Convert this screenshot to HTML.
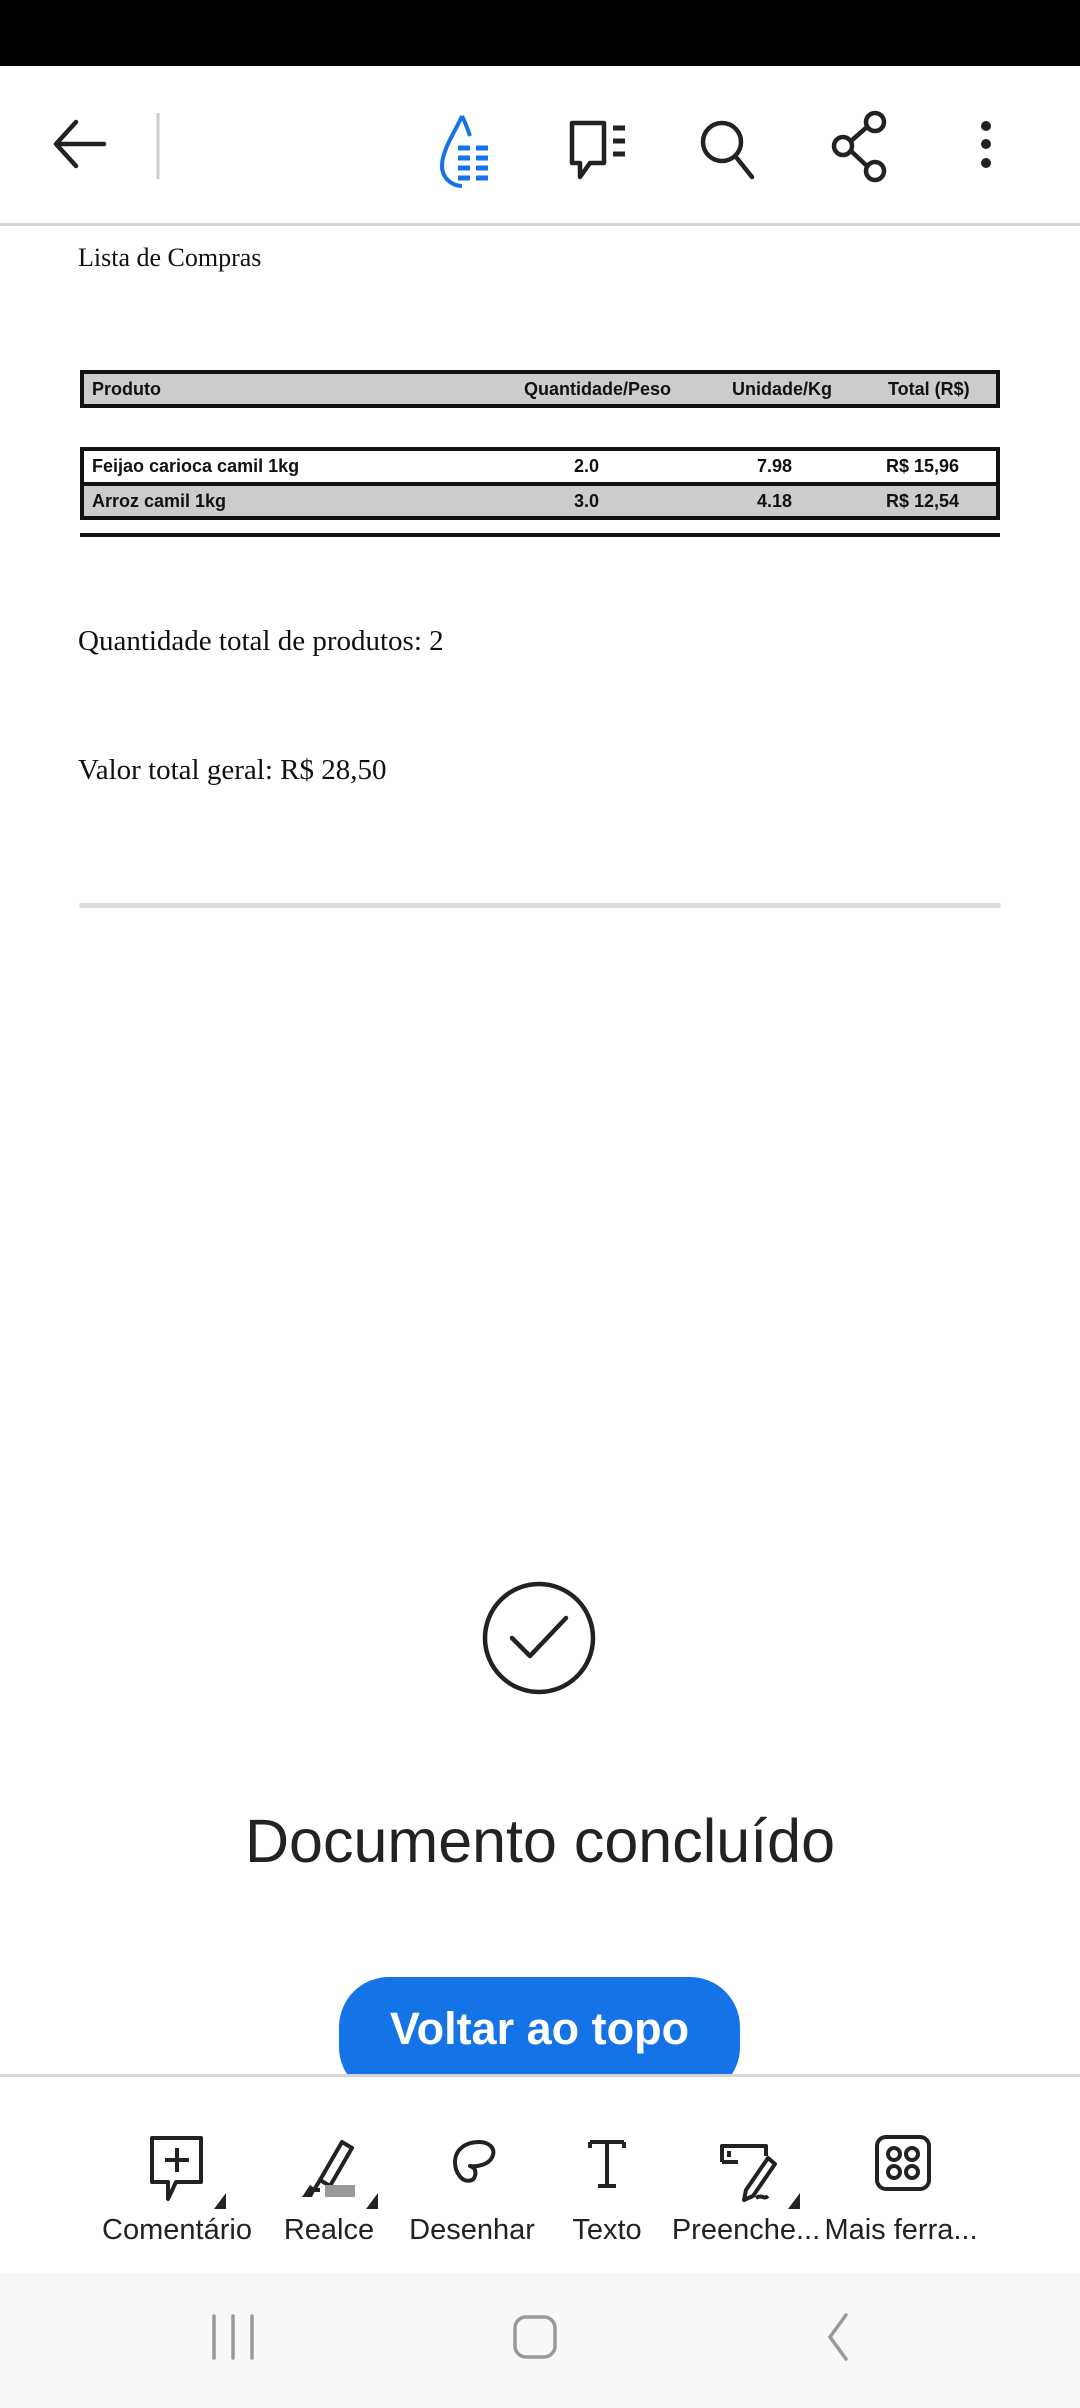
<!DOCTYPE html>
<html><head><meta charset="utf-8"><style>
*{margin:0;padding:0;box-sizing:border-box}
body{width:1080px;height:2408px;position:relative;background:#fff;overflow:hidden;font-family:"Liberation Sans",sans-serif;color:#222}
.abs{position:absolute}
.serif{font-family:"Liberation Serif",serif;color:#111}
.tb{position:absolute;left:80px;width:920px;border:4px solid #111;font-size:18px;font-weight:bold;color:#111}
.tb div{position:absolute;top:0}
.lbl{position:absolute;top:2214px;font-size:29px;color:#222;transform:translateX(-50%);white-space:nowrap}
</style></head><body>
<div class="abs" style="left:0;top:0;width:1080px;height:66px;background:#000"></div>
<svg class="abs" style="left:0;top:66px" width="1080" height="158">
<g fill="none" stroke="#222" stroke-width="4.5" stroke-linecap="round" stroke-linejoin="round">
<path d="M104 78H56M76 56L56 78L76 100"/>
</g>
<line x1="158" y1="47" x2="158" y2="113" stroke="#ccc" stroke-width="3"/>
<g fill="none" stroke="#1473e6" stroke-width="4">
<path d="M462 50C455 66 442 84 442 100C442 112 452 120 462 120"/>
<path d="M462 50C466 58 468 64 470 70"/>
</g>
<g stroke="#1473e6" stroke-width="5"><path d="M458 82h12M476 82h12M458 92h12M476 92h12M458 102h12M476 102h12M458 112h12M476 112h12"/></g>
<g fill="none" stroke="#222" stroke-width="4.5" stroke-linejoin="round">
<path d="M572 57h32v40h-14l-10 14v-14h-8z"/>
</g>
<g stroke="#222" stroke-width="5"><path d="M613 62h12M613 75h12M613 88h12"/></g>
<g fill="none" stroke="#222" stroke-width="4.5" stroke-linecap="round">
<circle cx="722" cy="76" r="19"/><path d="M736 91L752 111"/>
<circle cx="875" cy="56" r="9"/><circle cx="843" cy="80" r="9"/><circle cx="875" cy="105" r="9"/>
<path d="M851 75L867 61M851 85L867 100"/>
</g>
<g fill="#222"><circle cx="986" cy="60" r="5"/><circle cx="986" cy="78" r="5"/><circle cx="986" cy="97" r="5"/></g>
</svg>
<div class="abs" style="left:0;top:223px;width:1080px;height:3px;background:#d6d6d6"></div>
<div class="abs serif" style="left:78px;top:243px;font-size:26px">Lista de Compras</div>
<div class="tb" style="top:370px;height:38px;background:#ccc"><div style="left:8px;top:5px">Produto</div><div style="left:440px;top:5px">Quantidade/Peso</div><div style="left:648px;top:5px">Unidade/Kg</div><div style="left:804px;top:5px">Total (R$)</div></div>
<div class="tb" style="top:447px;height:39px;background:#fff"><div style="left:8px;top:5px">Feijao carioca camil 1kg</div><div style="left:490px;top:5px">2.0</div><div style="left:673px;top:5px">7.98</div><div style="left:802px;top:5px">R$ 15,96</div></div>
<div class="tb" style="top:482px;height:38px;background:#ccc"><div style="left:8px;top:5px">Arroz camil 1kg</div><div style="left:490px;top:5px">3.0</div><div style="left:673px;top:5px">4.18</div><div style="left:802px;top:5px">R$ 12,54</div></div>
<div class="abs" style="left:80px;top:533px;width:920px;height:4px;background:#111"></div>
<div class="abs serif" style="left:78px;top:625px;font-size:29px">Quantidade total de produtos: 2</div>
<div class="abs serif" style="left:78px;top:754px;font-size:29px">Valor total geral: R$ 28,50</div>
<div class="abs" style="left:79px;top:903px;width:922px;height:5px;background:#ddd;border-radius:3px"></div>
<svg class="abs" style="left:480px;top:1580px" width="120" height="120"><circle cx="59" cy="58" r="54" fill="none" stroke="#222" stroke-width="4.5"/><path d="M32 58L50 76L86 38" fill="none" stroke="#222" stroke-width="4.5" stroke-linecap="round" stroke-linejoin="round"/></svg>
<div class="abs" style="left:0;width:1080px;top:1806px;text-align:center;font-size:61px;color:#222">Documento concluído</div>
<div class="abs" style="left:339px;top:1977px;width:401px;height:120px;border-radius:50px;background:#1473e6;color:#fff;font-weight:bold;font-size:45px;text-align:center;line-height:104px">Voltar ao topo</div>
<div class="abs" style="left:0;top:2074px;width:1080px;height:200px;background:#fff;border-top:3px solid #d6d6d6"></div>
<svg class="abs" style="left:0;top:2106px" width="1080" height="110">
<g fill="none" stroke="#222" stroke-width="4" stroke-linejoin="round">
<path d="M152 32h49v44h-25l-8 17v-17h-16z"/>
<path d="M177 42v24M165 54h24"/>
<path d="M342 36l10 6-22 38-10-6z M320 74l-6 10h6"/>
<path d="M455 56c0-12 10-20 24-20 10 0 16 6 14 13-3 10-16 12-23 11 8 2 6 12 2 14-10 4-17-8-17-18z"/>
<path d="M590 36h34M607 36v44M598 80h18M590 36v6M624 36v6"/>
<path d="M722 56V40h44v10M722 56h16M729 45v6M768 52l7 6-22 32-9 4 2-10z M756 92c6-4 8 2 12-2"/>
<rect x="877" y="31" width="52" height="52" rx="9"/>
<circle cx="894" cy="48" r="6"/><circle cx="912" cy="48" r="6"/><circle cx="894" cy="66" r="6"/><circle cx="912" cy="66" r="6"/>
</g>
<rect x="325" y="79" width="30" height="12" fill="#999"/>
<path d="M302 91l8-12 6 4-4 8z" fill="#222"/>
<g fill="#222"><path d="M226 103l0-16-12 16z"/><path d="M378 103l0-16-12 16z"/><path d="M800 103l0-16-12 16z"/></g>
</svg>
<div class="lbl" style="left:177px">Comentário</div>
<div class="lbl" style="left:329px">Realce</div>
<div class="lbl" style="left:472px">Desenhar</div>
<div class="lbl" style="left:607px">Texto</div>
<div class="lbl" style="left:746px">Preenche...</div>
<div class="lbl" style="left:901px">Mais ferra...</div>
<div class="abs" style="left:0;top:2273px;width:1080px;height:135px;background:#f8f8f8"></div>
<svg class="abs" style="left:0;top:2266px" width="1080" height="135">
<g fill="none" stroke="#999" stroke-width="3.5" stroke-linecap="round">
<path d="M214 50v42M233 50v42M252 50v42"/>
<rect x="515" y="51" width="40" height="40" rx="11"/>
<path d="M846 49L830 71L846 93"/>
</g>
</svg>
</body></html>
